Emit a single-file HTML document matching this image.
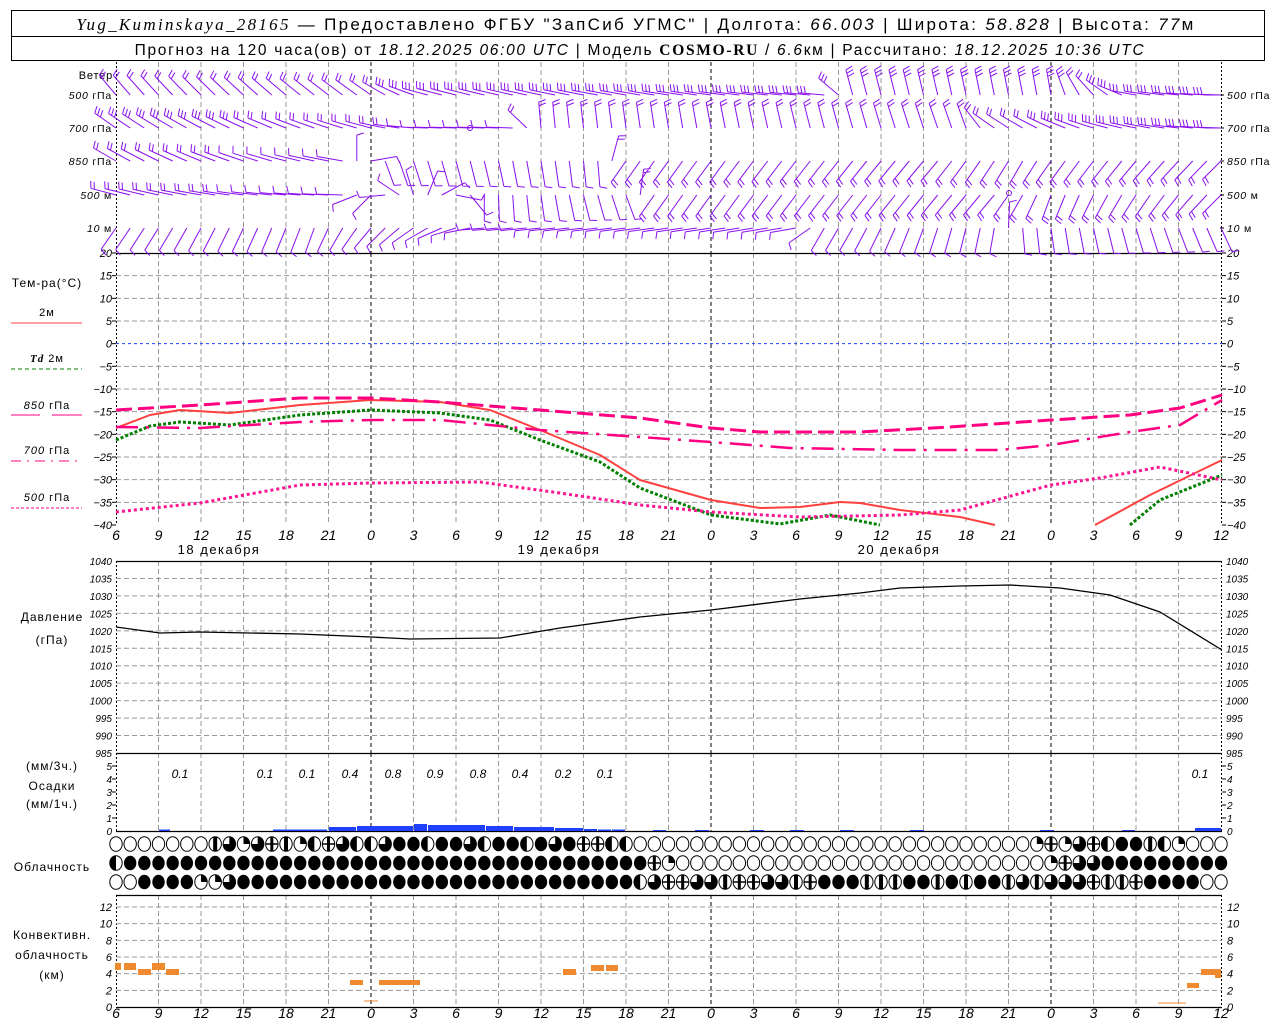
<!DOCTYPE html>
<html><head><meta charset="utf-8"><style>
body{margin:0;background:#fff;width:1280px;height:1024px;overflow:hidden}
svg{display:block}
text{font-family:"Liberation Sans",sans-serif;fill:#000}
.it{font-style:italic}
</style></head><body>
<svg id="s" width="1280" height="1024" xmlns="http://www.w3.org/2000/svg"></svg>
<script>
var o=[];
function X(h){return 116+h*340/24;}
function L(x1,y1,x2,y2,st,w,da){o.push('<line x1="'+x1+'" y1="'+y1+'" x2="'+x2+'" y2="'+y2+'" stroke="'+st+'" stroke-width="'+(w||1)+'"'+(da?' stroke-dasharray="'+da+'"':'')+'/>');}
function T(x,y,s,sz,anc,cls,extra){o.push('<text x="'+x+'" y="'+y+'" font-size="'+sz+'"'+(anc?' text-anchor="'+anc+'"':'')+(cls?' class="'+cls+'"':'')+(extra||'')+'>'+s+'</text>');}
function P(pts,st,w,da){o.push('<polyline fill="none" points="'+pts.map(function(p){return p.join(',')}).join(' ')+'" stroke="'+st+'" stroke-width="'+w+'"'+(da?' stroke-dasharray="'+da+'"':'')+' stroke-linejoin="round"/>');}
// header
o.push('<rect x="11.5" y="10.5" width="1253" height="50" fill="none" stroke="#000"/>');
L(11,36.5,1265,36.5,'#000');
T(636,30,'<tspan font-family="Liberation Serif" font-style="italic">Yug_Kuminskaya_28165</tspan> — Предоставлено ФГБУ "ЗапСиб УГМС" | Долгота: <tspan font-style="italic">66.003</tspan> | Широта: <tspan font-style="italic">58.828</tspan> | Высота: <tspan font-style="italic">77</tspan>м',17,'middle','',' letter-spacing="2.3"');
T(640,55,'Прогноз на 120 часа(ов) от <tspan font-style="italic">18.12.2025 06:00 UTC</tspan> | Модель <tspan font-family="Liberation Serif" font-weight="bold">COSMO-RU</tspan> / <tspan font-style="italic">6.6</tspan>км | Рассчитано: <tspan font-style="italic">18.12.2025 10:36 UTC</tspan>',15.5,'middle','',' letter-spacing="1.7"');
// vertical grid
var panels=[[62,253],[253,525],[561,753],[753,831],[895,1007]];
panels.forEach(function(p){
 for(var h=3;h<78;h+=3){var day=(h==18||h==42||h==66);L(X(h),p[0],X(h),p[1],day?'#000':'#999',1,day?'4,3':'5,3');}
 L(116.5,p[0],116.5,p[1],'#000',1,'2,2');L(1221.5,p[0],1221.5,p[1],'#000',1,'2,2');
});
[253,561,753,831,895,1007].forEach(function(y){L(116,y+0.5,1222,y+0.5,'#000',1.3);});
function TY(t){return 253+(20-t)*272/60;}
for(var t=15;t>=-35;t-=5){if(t==0)L(116,TY(t),1222,TY(t),'#2040ff',1,'3,3');else L(116,TY(t),1222,TY(t),'#999',1,'5,3');}
for(var t=20;t>=-40;t-=5){T(112,TY(t)+4,t==0?'0':(t<0?'−'+(-t):t),11,'end','it');T(1227,TY(t)+4,t==0?'0':(t<0?'−'+(-t):t),11,'','it');L(112,TY(t),116,TY(t),'#000');L(1222,TY(t),1226,TY(t),'#000');}
function PY(p){return 561+(1040-p)*192/55;}
for(var p=1040;p>=985;p-=5){if(p<1040&&p>985)L(116,PY(p),1222,PY(p),'#999',1,'5,3');T(112,PY(p)+4,p,10,'end','it');T(1226,PY(p)+4,p,10,'','it');}
for(var i=1;i<=5;i++){T(112,831-i*13+4,i,10,'end','it');T(1227,831-i*13+4,i,10,'','it');L(112,831-i*13,116,831-i*13,'#000');L(1222,831-i*13,1226,831-i*13,'#000');}
T(112,835,'0',10,'end','it');T(1227,835,'0',10,'','it');
function CY(v){return 1007-v*100/12;}
for(var v=2;v<=12;v+=2){L(116,CY(v),1222,CY(v),'#999',1,'5,3');}
for(var v=0;v<=12;v+=2){T(112,CY(v)+4,v,11,'end','it');T(1227,CY(v)+4,v,11,'','it');}
for(var h=0;h<=78;h+=3){var lab=(6+h)%24;T(X(h),540,lab,14,'middle','it');T(X(h),1018,lab,14,'middle','it');}
T(219,554,'18 декабря',13,'middle','',' letter-spacing="1.5"');T(559,554,'19 декабря',13,'middle','',' letter-spacing="1.5"');T(899,554,'20 декабря',13,'middle','',' letter-spacing="1.5"');
T(113,79,'Ветер',11,'end','',' letter-spacing="0.8"');
var lv=[[95,'<tspan font-style="italic">500</tspan> гПа'],[128,'<tspan font-style="italic">700</tspan> гПа'],[161,'<tspan font-style="italic">850</tspan> гПа'],[195,'<tspan font-style="italic">500</tspan>  м'],[228,'<tspan font-style="italic">10</tspan>   м']];
lv.forEach(function(a){T(112,a[0]+4,a[1],10.5,'end','',' letter-spacing="0.8"');T(1227,a[0]+4,a[1],10.5,'','',' letter-spacing="0.8"');L(1220,a[0],1224,a[0],'#000');});
var ls=' letter-spacing="1"';
T(47,287,'Тем-ра(°C)',12,'middle','',ls);
T(47,316,'2м',11,'middle','',ls);L(11,323,82,323,'#ff4040',1);
T(47,362,'<tspan font-family="Liberation Serif" font-style="italic" font-weight="bold">Td</tspan>  2м',11,'middle','',ls);L(11,369,82,369,'#008000',1,'4,3');
T(47,409,'<tspan font-style="italic">850</tspan> гПа',11,'middle','',ls);L(11,415,40,415,'#ff0080',1);L(52,415,82,415,'#ff0080',1);
T(47,454,'<tspan font-style="italic">700</tspan> гПа',11,'middle','',ls);L(11,461,82,461,'#ff0080',1,'10,6,2,6');
T(47,501,'<tspan font-style="italic">500</tspan> гПа',11,'middle','',ls);L(11,508,82,508,'#ff0080',1,'3,2');
T(52,621,'Давление',12,'middle','',ls);T(52,644,'(гПа)',12,'middle','',ls);
T(52,770,'(мм/3ч.)',12,'middle','',ls);T(52,790,'Осадки',12,'middle','',ls);T(52,808,'(мм/1ч.)',12,'middle','',ls);
T(52,871,'Облачность',12,'middle','',ls);
T(52,939,'Конвективн.',12,'middle','',ls);T(52,959,'облачность',12,'middle','',ls);T(52,979,'(км)',12,'middle','',ls);
P([[116,428],[150,415],[180,410],[230,413],[300,405],[371,400],[440,402],[490,410],[540,430],[600,455],[640,480],[711,500],[760,508],[800,507],[840,502],[860,503],[900,510],[960,517],[995,525]],'#ff4040',2);
P([[1095,525],[1150,495],[1222,460]],'#ff4040',2);
P([[116,440],[150,426],[180,422],[230,425],[300,415],[371,410],[440,413],[490,420],[540,440],[600,462],[640,488],[711,515],[780,524],[830,515],[870,523],[880,525]],'#008000',3,'3,2');
P([[1130,525],[1160,500],[1222,475]],'#008000',3,'3,2');
P([[116,410],[200,405],[300,398],[371,398],[440,402],[540,410],[640,418],[711,428],[760,432],[860,432],[950,427],[1051,420],[1130,415],[1180,408],[1222,395]],'#ff0080',3,'16,6');
P([[116,427],[200,428],[300,422],[371,420],[440,420],[540,430],[640,437],[711,442],[790,448],[900,450],[1000,450],[1051,445],[1130,432],[1180,425],[1222,400]],'#ff0080',2.5,'22,8,3,8');
P([[116,512],[200,503],[300,485],[371,483],[480,482],[560,493],[640,505],[711,512],[800,517],[900,515],[960,510],[1051,485],[1100,478],[1160,467],[1222,480]],'#ff1493',3,'3,3');
P([[116,627],[160,633],[200,632],[300,634],[371,637],[410,639],[500,638],[560,628],[640,617],[711,610],[800,599],[860,593],[900,588],[960,586],[1010,585],[1060,588],[1110,595],[1160,612],[1222,650]],'#000',1.3);
[[159,171,1.5],[273,328,1.5],[329,357,4],[357,414,5],[414,428,7],[428,486,6],[486,514,5],[514,555,4],[555,584,3],[584,598,2],[598,612,1.5],[612,626,1.5],[653,667,1],[695,710,1],[750,765,1],[790,805,1],[840,855,1],[910,925,1],[1040,1055,1],[1122,1136,1],[1195,1222,3]].forEach(function(b){o.push('<rect x="'+b[0]+'" y="'+(831-b[2])+'" width="'+(b[1]-b[0]-1)+'" height="'+b[2]+'" fill="#2040ff"/>');});
[[180,'0.1'],[265,'0.1'],[307,'0.1'],[350,'0.4'],[393,'0.8'],[435,'0.9'],[478,'0.8'],[520,'0.4'],[563,'0.2'],[605,'0.1'],[1200,'0.1']].forEach(function(a){T(a[0],778,a[1],12,'middle','it');});
[[115,963,7,122],[124,963,7,137],[138,969,6,152],[152,963,7,166],[166,969,6,180],[350,980,5,364],[379,980,5,421],[563,969,6,577],[591,965,6,605],[606,965,6,619],[1187,983,5,1200],[1201,969,6,1222],[1215,974,4,1222]].forEach(function(b){o.push('<rect x="'+b[0]+'" y="'+b[1]+'" width="'+(b[3]-b[0]-1)+'" height="'+b[2]+'" fill="#f08a30"/>');});
L(364,1001,378,1001,'#f08a30',1);L(1158,1003,1186,1003,'#f08a30',1);
function pad(s){while(s.length<79)s+='o';return s.substr(0,79);}
var rows=[
 pad('ooooooovtqtevqhethhtbbhbbthbbhbtbeehh'+'oooooooooooooooooooooooooooo'+'qeqtehbbvhqoo'),
 pad('h'+'bbbbbbbbbbbbbbbbbbbbbbbbbbbbbbbbbbbbbeq'+'oooooooooooooooooooooooooo'+'qettbbbbbbbbbb'),
 pad('oobbbbqqtbbbbbbbbbbbbbbbbbbbbbbbbbbbbht'+'eettveettvebbbvvvbbvbvbbvtvtttevvebb'+'bb')
];
var ry=[844,863,882];
for(var r=0;r<3;r++){for(var i=0;i<79;i++){var cx=X(i),cy=ry[r],c=rows[r][i],rx=6.2,ry2=7.3;
 var s='<g>';
 if(c=='b'){s+='<ellipse cx="'+cx+'" cy="'+cy+'" rx="'+rx+'" ry="'+ry2+'" fill="#000"/>';}
 else{s+='<ellipse cx="'+cx+'" cy="'+cy+'" rx="'+rx+'" ry="'+ry2+'" fill="#fff" stroke="#000" stroke-width="1"/>';
  if(c=='h')s+='<path d="M'+cx+','+(cy-ry2)+' A'+rx+','+ry2+' 0 0 0 '+cx+','+(cy+ry2)+'Z" fill="#000"/>';
  if(c=='q')s+='<path d="M'+cx+','+cy+' L'+cx+','+(cy-ry2)+' A'+rx+','+ry2+' 0 0 1 '+(cx+rx)+','+cy+'Z" fill="#000"/>';
  if(c=='t')s+='<path d="M'+cx+','+cy+' L'+cx+','+(cy-ry2)+' A'+rx+','+ry2+' 0 1 1 '+(cx-rx)+','+cy+'Z" fill="#000"/>';
  if(c=='v')s+='<rect x="'+(cx-2)+'" y="'+(cy-ry2)+'" width="4" height="'+(2*ry2)+'" fill="#000"/>';
  if(c=='e')s+='<line x1="'+(cx-rx)+'" y1="'+cy+'" x2="'+(cx+rx)+'" y2="'+cy+'" stroke="#000" stroke-width="1.5"/><rect x="'+(cx-1.5)+'" y="'+(cy-ry2)+'" width="3" height="'+(2*ry2)+'" fill="#000"/>';
 }
 o.push(s+'</g>');}}
function lerp(arr,h){for(var i=0;i<arr.length-1;i++){if(h>=arr[i][0]&&h<=arr[i+1][0]){var f=(h-arr[i][0])/(arr[i+1][0]-arr[i][0]);return [arr[i][1]+f*(arr[i+1][1]-arr[i][1]),Math.round(arr[i][2]+f*(arr[i+1][2]-arr[i][2]))];}}return [arr[arr.length-1][1],arr[arr.length-1][2]];}
var W=[
 [95,[[0,-40,2],[18,-55,2],[22,-75,3],[50,-85,3],[52,-15,3],[66,-10,3],[68,-30,2],[72,-80,3],[78,-88,3]]],
 [128,[[0,-55,3],[18,-75,2],[22,-88,1],[28,-88,1],[30,-5,2],[45,-12,2],[60,-20,2],[62,-55,2],[70,-75,3],[78,-88,3]]],
 [161,[[0,-60,2],[16,-80,1],[19,160,1],[34,175,1],[36,-145,2],[58,-140,2],[64,-150,2],[66,-145,2],[78,-135,2]]],
 [195,[[0,-75,2],[16,-88,1],[18,-135,1],[26,180,1],[36,160,1],[38,-145,2],[62,-140,2],[66,-160,2],[78,-135,2]]],
 [228,[[0,-145,1],[14,-160,1],[22,-120,1],[26,-95,1],[48,-100,1],[50,-150,1],[52,-150,1],[62,-170,1],[64,175,1],[78,155,1]]]
];
var pp='';
W.forEach(function(lv){var y0=lv[0];for(var h=0;h<=78;h++){var a=lerp(lv[1],h),th=a[0]*Math.PI/180,n=a[1];
 var bx=X(h),by=y0,len=26,dx=Math.sin(th),dy=-Math.cos(th),tx=bx+dx*len,ty=by+dy*len;
 pp+='M'+bx.toFixed(1)+','+by.toFixed(1)+'L'+tx.toFixed(1)+','+ty.toFixed(1);
 var px=dy,py=-dx;
 if(px<0||(Math.abs(px)<0.1&&py>0)){px=-px;py=-py;}
 for(var k=0;k<n;k++){var sx=tx-dx*k*3.5,sy=ty-dy*k*3.5;pp+='M'+sx.toFixed(1)+','+sy.toFixed(1)+'L'+(sx+px*7+dx*2).toFixed(1)+','+(sy+py*7+dy*2).toFixed(1);}
}});
o.push('<path d="'+pp+'" fill="none" stroke="#8a10f0" stroke-width="1"/>');
o.push('<circle cx="470" cy="128" r="2.5" fill="none" stroke="#8a10f0"/><circle cx="1009" cy="193" r="2.5" fill="none" stroke="#8a10f0"/>');
document.getElementById('s').innerHTML=o.join('');
</script>
</body></html>
